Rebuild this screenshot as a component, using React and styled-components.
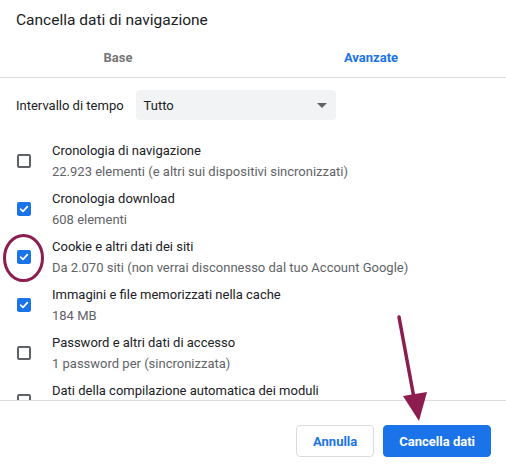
import React from 'react'
import styled, { createGlobalStyle } from 'styled-components'

const GlobalStyle = createGlobalStyle`
  html, body {
    margin: 0;
    padding: 0;
    background: #ffffff;
  }
  body {
    font-family: Roboto, "Liberation Sans", Arial, sans-serif;
    color: #202124;
  }
`

const Dialog = styled.div`
  position: relative;
  width: 506px;
  height: 466px;
  background: #ffffff;
  overflow: hidden;
  display: flex;
  flex-direction: column;
`

const Title = styled.h1`
  margin: 0;
  padding: 10px 16px 0;
  font-size: 15.5px;
  font-weight: 400;
  line-height: 20px;
  color: #202124;
`

const Tabs = styled.div`
  display: grid;
  grid-template-columns: 236px 1fr;
  height: 40px;
  margin-top: 7px;
  border-bottom: 1px solid #dadce0;
`

const Tab = styled.div`
  display: flex;
  align-items: center;
  justify-content: center;
  font-size: 13px;
  font-weight: 700;
  color: ${p => (p.$active ? '#1a73e8' : '#757575')};
`

const Body = styled.div`
  height: 323px;
  overflow: hidden;
  border-bottom: 1px solid #dadce0;
  padding-top: 12px;
  box-sizing: border-box;
`

const RangeRow = styled.div`
  display: flex;
  align-items: center;
  padding-left: 16px;
  gap: 12px;
  height: 30px;
  margin-bottom: 17px;
`

const Label = styled.span`
  font-size: 13px;
  color: #202124;
`

const Select = styled.div`
  width: 200px;
  height: 30px;
  box-sizing: border-box;
  background: #f1f3f4;
  border-radius: 4px;
  display: flex;
  align-items: center;
  justify-content: space-between;
  padding: 0 9px 0 8px;
  font-size: 13px;
  color: #202124;
`

const Caret = styled.span`
  width: 0;
  height: 0;
  border-left: 5px solid transparent;
  border-right: 5px solid transparent;
  border-top: 5px solid #5f6368;
`

const Row = styled.div`
  display: flex;
  align-items: center;
  height: 48px;
  padding-left: 17px;
  gap: 21px;
`

const Box = styled.span`
  flex: none;
  width: 14px;
  height: 14px;
  box-sizing: border-box;
  border-radius: 2px;
  border: ${p => (p.$checked ? 'none' : '2px solid #5f6368')};
  background: ${p => (p.$checked ? '#1a73e8' : 'transparent')};
  display: flex;
  align-items: center;
  justify-content: center;
`

const Texts = styled.div`
  display: flex;
  flex-direction: column;
`

const ItemTitle = styled.span`
  font-size: 13px;
  line-height: 20px;
  color: #202124;
`

const ItemSub = styled.span`
  font-size: 13px;
  line-height: 20px;
  color: #5f6368;
  margin-top: 1px;
`

const Footer = styled.div`
  display: flex;
  justify-content: flex-end;
  gap: 9px;
  padding: 24px 15px 0 0;
`

const Button = styled.button`
  height: 32px;
  box-sizing: border-box;
  border-radius: 4px;
  font-family: inherit;
  font-size: 13px;
  font-weight: 700;
  padding: 0 ${p => (p.$primary ? '15px' : '16px')};
  cursor: pointer;
  border: 1px solid ${p => (p.$primary ? '#1a73e8' : '#dadce0')};
  background: ${p => (p.$primary ? '#1a73e8' : '#ffffff')};
  color: ${p => (p.$primary ? '#ffffff' : '#1a73e8')};
`

const Overlay = styled.svg`
  position: absolute;
  left: 0;
  top: 0;
  pointer-events: none;
`

const items = [
  { title: 'Cronologia di navigazione', sub: '22.923 elementi (e altri sui dispositivi sincronizzati)', checked: false },
  { title: 'Cronologia download', sub: '608 elementi', checked: true },
  { title: 'Cookie e altri dati dei siti', sub: 'Da 2.070 siti (non verrai disconnesso dal tuo Account Google)', checked: true },
  { title: 'Immagini e file memorizzati nella cache', sub: '184 MB', checked: true },
  { title: 'Password e altri dati di accesso', sub: '1 password per (sincronizzata)', checked: false },
  { title: 'Dati della compilazione automatica dei moduli', sub: '', checked: false },
]

const Check = () => (
  <svg width="10" height="10" viewBox="0 0 10 10">
    <path d="M1.6 5.2 L4 7.4 L8.4 2.6" fill="none" stroke="#fff" strokeWidth="1.7" strokeLinecap="round" strokeLinejoin="round" />
  </svg>
)

const App = () => (
  <>
    <GlobalStyle />
    <Dialog>
      <Title>Cancella dati di navigazione</Title>
      <Tabs>
        <Tab>Base</Tab>
        <Tab $active>Avanzate</Tab>
      </Tabs>
      <Body>
        <RangeRow>
          <Label>Intervallo di tempo</Label>
          <Select>
            <span>Tutto</span>
            <Caret />
          </Select>
        </RangeRow>
        {items.map(item => (
          <Row key={item.title}>
            <Box $checked={item.checked}>{item.checked && <Check />}</Box>
            <Texts>
              <ItemTitle>{item.title}</ItemTitle>
              <ItemSub>{item.sub || '\u00a0'}</ItemSub>
            </Texts>
          </Row>
        ))}
      </Body>
      <Footer>
        <Button>Annulla</Button>
        <Button $primary>Cancella dati</Button>
      </Footer>
      <Overlay width="506" height="466" viewBox="0 0 506 466">
        <ellipse cx="23.5" cy="258" rx="19" ry="22.5" fill="none" stroke="#8c1d4e" strokeWidth="3" />
        <line x1="399" y1="317" x2="414" y2="398" stroke="#8c1d4e" strokeWidth="3.5" strokeLinecap="round" />
        <polygon points="403,396 427,392 419,421" fill="#8c1d4e" />
      </Overlay>
    </Dialog>
  </>
)

export default App
